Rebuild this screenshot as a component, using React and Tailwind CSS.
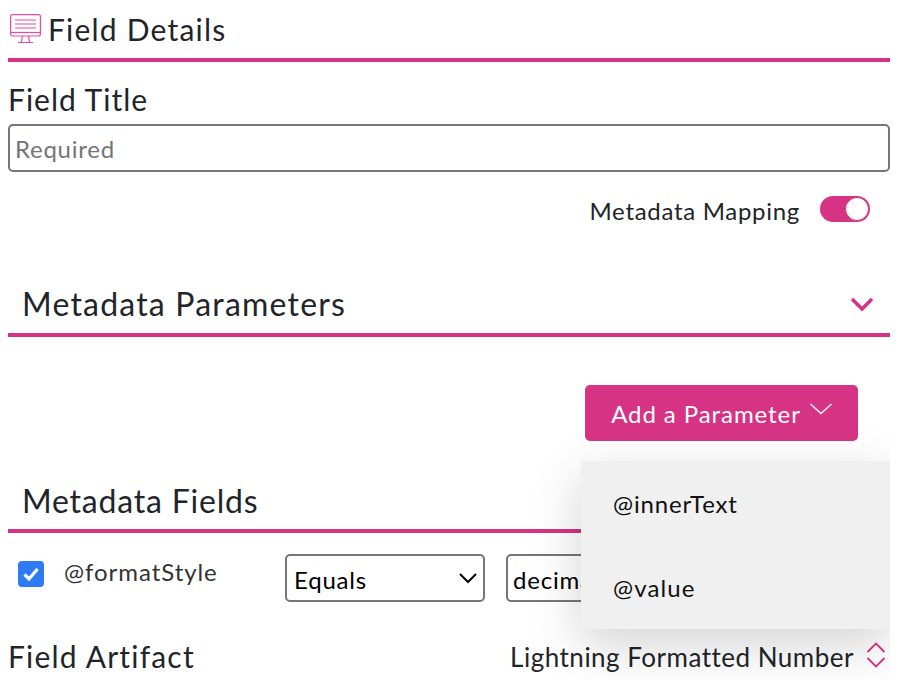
import React from "react";

function Monitor() {
  return (
    <svg width="31" height="30" viewBox="0 0 31 30" fill="none" stroke="#e64ca0" strokeWidth="1.2" className="shrink-0">
      <rect x="0.6" y="0.6" width="29.8" height="21.4" rx="2" />
      <path d="M5 6h21M5 10h21M5 14h21" />
      <path d="M0.6 18.5h29.8" />
      <path d="M12.5 22l-1 6M18.5 22l1 6M8 28.5h15" />
    </svg>
  );
}

export default function App() {
  return (
    <div className="h-[680px] w-[898px] overflow-hidden bg-white px-2 font-['Lato','Noto_Sans',sans-serif] text-[#212529]">
      <div className="relative h-[680px] overflow-hidden">
        <div className="flex h-[62px] items-center gap-[7px] border-b-4 border-[#d63384] pl-[2px]">
          <Monitor />
          <span className="text-[30px] leading-none tracking-[1.2px]">Field Details</span>
        </div>

        <div className="mt-[19px] text-[30px] leading-[36px] tracking-[1px]">Field Title</div>
        <div className="mt-[7px] flex h-[48px] items-center rounded-[5px] border-2 border-[#767676] px-[5px] pt-[2px] text-[24px] tracking-[0.75px] text-[#757575]">
          Required
        </div>

        <div className="mt-[24px] flex h-[26px] items-center justify-end pr-[20px]">
          <span className="mt-[4px] text-[24px] tracking-[0.7px]">Metadata Mapping</span>
          <span className="ml-[20px] flex h-[26px] w-[50px] items-center justify-end rounded-full bg-[#d63384] pr-[1px]">
            <span className="h-[24px] w-[24px] rounded-full border border-[#d63384] bg-white" />
          </span>
        </div>

        <div className="mt-[52px] flex h-[63px] items-center justify-between border-b-4 border-[#d63384] pl-[14px] pr-[16px]">
          <span className="text-[32px] tracking-[1.2px]">Metadata Parameters</span>
          <svg width="24" height="16" viewBox="0 0 24 16" fill="none" stroke="#d63384" strokeWidth="3.5">
            <path d="M2 3l10 10L22 3" />
          </svg>
        </div>

        <div className="mt-[48px] flex justify-end pr-[32px]">
          <div className="flex h-[56px] w-[273px] items-center justify-center gap-[9px] rounded-[5px] bg-[#d63384] pt-[2px] text-[24px] tracking-[0.93px] text-white">
            <span>Add a Parameter</span>
            <svg width="22" height="12" viewBox="0 0 22 12" fill="none" stroke="white" strokeWidth="1.3" className="mb-[11px]">
              <path d="M0.5 1l10.5 9.5L21.5 1" />
            </svg>
          </div>
        </div>

        <div className="mt-[32px] flex h-[60px] items-center border-b-4 border-[#d63384] pl-[14px] text-[32px] tracking-[0.8px]">
          Metadata Fields
        </div>

        <div className="mt-[21px] flex h-[48px] items-start">
          <span className="ml-[10px] mt-[7px] flex h-[26px] w-[26px] items-center justify-center rounded-[4px] bg-[#2f7bf6]">
            <svg width="18" height="18" viewBox="0 0 18 18" fill="none" stroke="white" strokeWidth="3.2">
              <path d="M2.5 9.5l4.5 4.5 8.5-10" />
            </svg>
          </span>
          <span className="ml-[20px] mt-[3px] w-[221px] text-[24px] leading-[30px] tracking-[0.95px] text-[#333]">@formatStyle</span>
          <div className="flex h-[48px] w-[200px] items-center justify-between rounded-[5px] border-2 border-[#767676] pl-[7px] pr-[5px] text-[24px] tracking-[0.8px] text-black">
            <span className="pt-[3px]">Equals</span>
            <svg width="20" height="12" viewBox="0 0 20 12" fill="none" stroke="black" strokeWidth="2">
              <path d="M2 2l8 8 8-8" />
            </svg>
          </div>
          <div className="ml-[21px] flex h-[48px] w-[300px] items-center rounded-[5px] border-2 border-[#767676] pl-[5px] pt-[3px] text-[24px] tracking-[0.8px] text-black">
            decimal
          </div>
        </div>

        <div className="mt-[31px] flex h-[48px] items-center justify-between pr-[4px]">
          <span className="mb-[2px] text-[30px] tracking-[1.2px]">Field Artifact</span>
          <span className="flex items-center gap-[12px] text-[26px] tracking-[0.5px]">
            Lightning Formatted Number
            <svg width="20" height="26" viewBox="0 0 20 26" fill="none" stroke="#d63384" strokeWidth="1.8" className="mb-[4px]">
              <path d="M1.5 10L10 1.5l8.5 8.5M1.5 16L10 24.5 18.5 16" />
            </svg>
          </span>
        </div>

        <div className="absolute left-[573px] top-[461px] flex h-[168px] w-[309px] flex-col bg-[#f0f0f0] text-[24px] text-[#111] shadow-[0_16px_48px_rgba(0,0,0,0.175)]">
          <div className="flex h-[84px] items-center pl-[32px] pt-[2px] tracking-[0.85px]">@innerText</div>
          <div className="flex h-[84px] items-center pl-[32px] pt-[2px] tracking-[1.1px]">@value</div>
        </div>
      </div>
    </div>
  );
}
